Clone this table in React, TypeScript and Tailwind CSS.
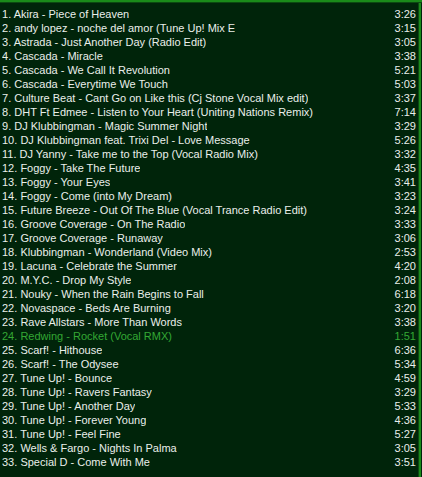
const tracks: [string, string][] = [
  ['Akira - Piece of Heaven', '3:26'],
  ['andy lopez - noche del amor (Tune Up! Mix E', '3:15'],
  ['Astrada - Just Another Day (Radio Edit)', '3:05'],
  ['Cascada - Miracle', '3:38'],
  ['Cascada - We Call It Revolution', '5:21'],
  ['Cascada - Everytime We Touch', '5:03'],
  ['Culture Beat - Cant Go on Like this (Cj Stone Vocal Mix edit)', '3:37'],
  ['DHT Ft Edmee - Listen to Your Heart (Uniting Nations Remix)', '7:14'],
  ['DJ Klubbingman - Magic Summer Night', '3:29'],
  ['DJ Klubbingman feat. Trixi Del - Love Message', '5:26'],
  ['DJ Yanny - Take me to the Top (Vocal Radio Mix)', '3:32'],
  ['Foggy - Take The Future', '4:35'],
  ['Foggy - Your Eyes', '3:41'],
  ['Foggy - Come (into My Dream)', '3:23'],
  ['Future Breeze - Out Of The Blue (Vocal Trance Radio Edit)', '3:24'],
  ['Groove Coverage - On The Radio', '3:33'],
  ['Groove Coverage - Runaway', '3:06'],
  ['Klubbingman - Wonderland (Video Mix)', '2:53'],
  ['Lacuna - Celebrate the Summer', '4:20'],
  ['M.Y.C. - Drop My Style', '2:08'],
  ['Nouky - When the Rain Begins to Fall', '6:18'],
  ['Novaspace - Beds Are Burning', '3:20'],
  ['Rave Allstars - More Than Words', '3:38'],
  ['Redwing - Rocket (Vocal RMX)', '1:51'],
  ['Scarf! - Hithouse', '6:36'],
  ['Scarf! - The Odysee', '5:34'],
  ['Tune Up! - Bounce', '4:59'],
  ['Tune Up! - Ravers Fantasy', '3:29'],
  ['Tune Up! - Another Day', '5:33'],
  ['Tune Up! - Forever Young', '4:36'],
  ['Tune Up! - Feel Fine', '5:27'],
  ['Wells & Fargo - Nights In Palma', '3:05'],
  ['Special D - Come With Me', '3:51'],
]

const current = 23

export default function App() {
  return (
    <div className="w-[422px] h-[477px] flex flex-col bg-[#00240a] overflow-hidden font-['Liberation_Sans',Arial,sans-serif] text-[11px] leading-[14px]">
      <div className="h-[2px] bg-[#1a8a1a]" />
      <div className="h-[1px] bg-[#0b4a10]" />
      <div className="flex flex-1 min-h-0">
        <div className="flex-1 min-w-0 pt-[4px] pl-[2px] pr-[2px]">
          {tracks.map(([title, time], i) => (
            <div
              key={i}
              className={
                'flex h-[14px] justify-between items-center whitespace-nowrap ' +
                (i === current ? 'text-[#34a834]' : 'text-[#eaefea]')
              }
            >
              <span className="overflow-hidden">
                {i + 1}. {title}
              </span>
              <span className="pl-2">{time}</span>
            </div>
          ))}
        </div>
        <div className="w-[1px] bg-[#0b4a10]" />
        <div className="w-[2px] bg-[#1a8a1a]" />
        <div className="w-[1px] bg-[#00240a]" />
      </div>
    </div>
  )
}
